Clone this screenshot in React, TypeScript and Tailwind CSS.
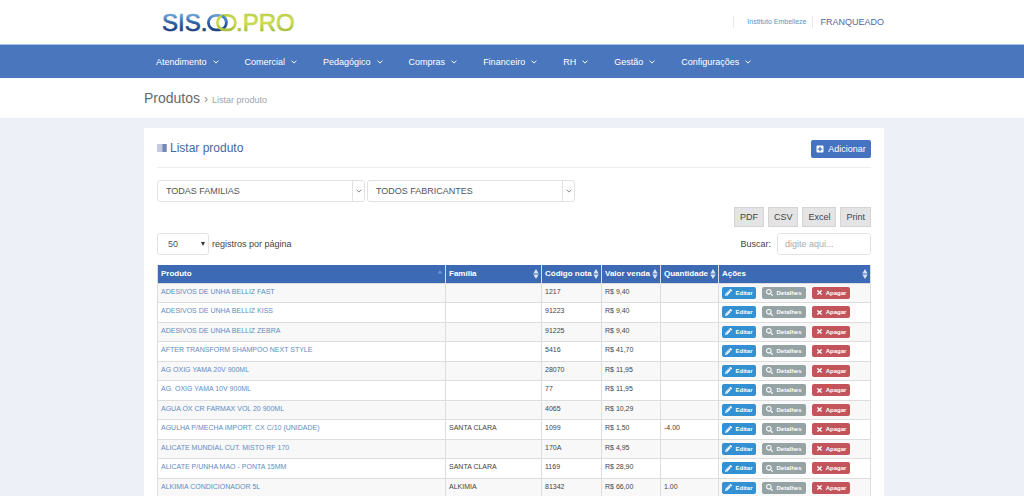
import type { ReactNode } from 'react';
import { FaPencilAlt, FaPlusSquare, FaSearch, FaTimes } from 'react-icons/fa';

const menu = ['Atendimento', 'Comercial', 'Pedagógico', 'Compras', 'Financeiro', 'RH', 'Gestão', 'Configurações'];

// the product column takes whatever width the others leave
const columns = [
  { label: 'Produto', width: '', sorted: true },
  { label: 'Família', width: 'w-[96px]' },
  { label: 'Código nota', width: 'w-[60px]' },
  { label: 'Valor venda', width: 'w-[59px]' },
  { label: 'Quantidade', width: 'w-[58px]' },
  { label: 'Ações', width: 'w-[152px]' },
];

const products = [
  { name: 'ADESIVOS DE UNHA BELLIZ FAST', family: '', code: '1217', price: 'R$ 9,40', qty: '' },
  { name: 'ADESIVOS DE UNHA BELLIZ KISS', family: '', code: '91223', price: 'R$ 9,40', qty: '' },
  { name: 'ADESIVOS DE UNHA BELLIZ ZEBRA', family: '', code: '91225', price: 'R$ 9,40', qty: '' },
  { name: 'AFTER TRANSFORM SHAMPOO NEXT STYLE', family: '', code: '5416', price: 'R$ 41,70', qty: '' },
  { name: 'AG OXIG YAMA 20V 900ML', family: '', code: '28070', price: 'R$ 11,95', qty: '' },
  { name: 'AG. OXIG YAMA 10V 900ML', family: '', code: '77', price: 'R$ 11,95', qty: '' },
  { name: 'AGUA OX CR FARMAX VOL 20 900ML', family: '', code: '4065', price: 'R$ 10,29', qty: '' },
  { name: 'AGULHA P/MECHA IMPORT. CX C/10 (UNIDADE)', family: 'SANTA CLARA', code: '1099', price: 'R$ 1,50', qty: '-4.00' },
  { name: 'ALICATE MUNDIAL CUT. MISTO RF 170', family: '', code: '170A', price: 'R$ 4,95', qty: '' },
  { name: 'ALICATE P/UNHA MAO - PONTA 15MM', family: 'SANTA CLARA', code: '1169', price: 'R$ 28,90', qty: '' },
  { name: 'ALKIMIA CONDICIONADOR 5L', family: 'ALKIMIA', code: '81342', price: 'R$ 66,00', qty: '1.00' },
];

function Container({ children, className = '' }: { children: ReactNode; className?: string }) {
  return <div className={`mx-auto w-full max-w-[744px] pl-1 ${className}`}>{children}</div>;
}

function Logo() {
  return (
    <svg width="140" height="32" viewBox="0 0 140 32" role="img" aria-label="SIS.OO.PRO">
      <defs>
        <linearGradient id="logo-blue" gradientUnits="userSpaceOnUse" x1="0" y1="8" x2="0" y2="25">
          <stop offset="0" stopColor="#6fa9dc" />
          <stop offset="0.5" stopColor="#2f62a5" />
          <stop offset="1" stopColor="#1d4080" />
        </linearGradient>
        <linearGradient id="logo-green" gradientUnits="userSpaceOnUse" x1="0" y1="8" x2="0" y2="25">
          <stop offset="0" stopColor="#bdd04a" />
          <stop offset="0.5" stopColor="#cddc55" />
          <stop offset="1" stopColor="#a5be3c" />
        </linearGradient>
      </defs>
      <g fontFamily="Liberation Sans, Arial, sans-serif" fontSize="24" strokeWidth="0.7">
        <text x="0" y="25" fill="url(#logo-blue)" stroke="url(#logo-blue)">SIS.</text>
        <text x="74" y="25" fill="url(#logo-green)" stroke="url(#logo-green)">.PRO</text>
      </g>
      <g fill="none" strokeWidth="2.8">
        <rect x="46.4" y="9.4" width="18" height="14.4" rx="7.2" stroke="url(#logo-blue)" />
        <rect x="55.4" y="9.4" width="18" height="14.4" rx="7.2" stroke="url(#logo-green)" />
        <path d="M60 10 a7.2 7.2 0 0 1 4.4 6" stroke="#4a86c4" />
      </g>
    </svg>
  );
}

function Chevron({ className }: { className: string }) {
  return (
    <svg width="6" height="4" viewBox="0 0 6 4" fill="none" stroke="currentColor" className={className} aria-hidden="true">
      <path d="M0.5 0.6 L3 3.1 L5.5 0.6" />
    </svg>
  );
}

function FilterSelect({ label }: { label: string }) {
  return (
    <div className="relative w-[208px]">
      <select
        aria-label={label}
        className="h-[22px] w-full appearance-none rounded-[3px] border border-[#e2e2e2] bg-white pl-2 pr-4 text-[9px] text-[#555555]"
      >
        <option>{label}</option>
      </select>
      <span className="pointer-events-none absolute inset-y-px right-px flex w-3 items-center justify-center border-l border-[#e2e2e2]">
        <Chevron className="text-[#888888]" />
      </span>
    </div>
  );
}

function SortIcon({ sorted }: { sorted?: boolean }) {
  if (sorted) {
    return (
      <svg className="shrink-0" width="6" height="10" viewBox="0 0 6 10" fill="#6f93d0" aria-hidden="true">
        <path d="M3 1 L5.5 4.5 H0.5 Z" />
      </svg>
    );
  }
  return (
    <svg className="shrink-0" width="6" height="10" viewBox="0 0 6 10" fill="#d6e2f5" aria-hidden="true">
      <path d="M3 0 L5.7 4.4 H0.3 Z M3 10 L0.3 5.6 H5.7 Z" />
    </svg>
  );
}

function ActionButton({ icon, label, className }: { icon: ReactNode; label: string; className: string }) {
  return (
    <button className={`flex h-3 items-center justify-center gap-[3px] rounded-[2px] text-[6px] font-bold leading-none text-white ${className}`}>
      {icon}
      {label}
    </button>
  );
}

export default function App() {
  return (
    <div className="h-screen overflow-hidden bg-[#eef0f8] font-['Liberation_Sans',Arial,sans-serif] text-[9px] leading-3 text-[#444444]">
      <header className="bg-white">
        <Container className="flex h-11 items-center justify-between">
          <div className="pl-[18px]">
            <Logo />
          </div>
          <div className="flex items-center">
            <a href="#instituto" className="border-l border-[#e4e7ee] pl-[13px] pr-[6px] text-[7px] text-[#5b93c7]">
              Instituto Embelleze
            </a>
            <span className="border-l border-[#e4e7ee] pl-[7px] text-[#56689a]">FRANQUEADO</span>
          </div>
        </Container>
      </header>

      <nav className="border-t border-[#a9c3e6] bg-[#4a76be]">
        <Container>
          <ul className="flex h-[33px] items-center gap-[26px] pl-3">
            {menu.map((item) => (
              <li key={item}>
                <a href={`#${item.toLowerCase()}`} className="flex items-center gap-[6px] text-white">
                  {item}
                  <Chevron className="text-white" />
                </a>
              </li>
            ))}
          </ul>
        </Container>
      </nav>

      <div className="bg-white">
        <Container className="flex h-10 items-baseline gap-1 pt-3">
          <h1 className="text-[14px] leading-4 text-[#5f6b6d]">Produtos</h1>
          <span className="text-[12px] text-[#8a9496]">›</span>
          <span className="text-[#a0a6b0]">Listar produto</span>
        </Container>
      </div>

      <Container className="pt-[10px]">
        <main className="bg-white px-[13px] pt-3">
          <div className="flex items-start justify-between border-b border-[#eeeeee] pb-[9px]">
            <h2 className="flex items-center gap-[3px] pt-px text-[12px] leading-[14px] text-[#44699f]">
              <svg width="10" height="8" viewBox="0 0 10 8" aria-hidden="true">
                <path fill="#c3cbe3" d="M0 0h5v8H0z" />
                <path fill="#98a5cc" d="M5 0h1v8H5zM9 0h1v8H9z" />
                <path fill="#7687b3" d="M6 0h3v8H6z" />
              </svg>
              Listar produto
            </h2>
            <button className="flex h-[18px] w-[60px] items-center justify-center gap-1 rounded-[2px] bg-[#4573c1] text-white">
              <FaPlusSquare className="size-2" />
              Adicionar
            </button>
          </div>

          <div className="flex gap-[2px] pt-3">
            <FilterSelect label="TODAS FAMILIAS" />
            <FilterSelect label="TODOS FABRICANTES" />
          </div>

          <div className="flex justify-end gap-1 pt-[5px]">
            {['PDF', 'CSV', 'Excel', 'Print'].map((format) => (
              <button key={format} className="h-5 border border-[#d4d4d4] bg-[#e4e4e4] px-[5px] text-[#444444]">
                {format}
              </button>
            ))}
          </div>

          <div className="flex items-center justify-between pb-[10px] pt-[6px]">
            <label className="flex items-center gap-[3px]">
              <span className="relative">
                <select className="h-[22px] w-[52px] appearance-none rounded-[3px] border border-[#e2e2e2] bg-white pl-[10px] text-[9px] text-[#555555]">
                  <option>50</option>
                </select>
                <svg className="pointer-events-none absolute right-1 top-1/2 -translate-y-1/2" width="4" height="4" viewBox="0 0 4 4" aria-hidden="true">
                  <path fill="#333333" d="M0 0h4L2 4z" />
                </svg>
              </span>
              registros por página
            </label>
            <label className="flex items-center gap-[6px]">
              Buscar:
              <input
                type="text"
                placeholder="digite aqui..."
                className="h-[22px] w-[94px] rounded-[3px] border border-[#e2e2e2] px-[7px] text-[9px] placeholder:text-[#aaaaaa]"
              />
            </label>
          </div>

          <table className="w-full table-fixed border-collapse text-left text-[7px] leading-2">
            <thead>
              <tr className="h-[18px] bg-[#3c6ab5] text-[8px] text-white">
                {columns.map((column) => (
                  <th key={column.label} className={`border-x border-[#dddddd] p-0 pl-[3px] pr-[2px] font-bold ${column.width}`}>
                    <div className="flex items-center justify-between whitespace-nowrap">
                      {column.label}
                      <SortIcon sorted={column.sorted} />
                    </div>
                  </th>
                ))}
              </tr>
            </thead>
            <tbody>
              {products.map((product) => (
                <tr key={product.code} className="odd:h-[19px] odd:bg-[#f8f8f8] even:h-5">
                  <td className="border border-[#dddddd] p-0 pl-[3px] pt-1 align-top">
                    <a href={`#produto-${product.code}`} className="text-[#5f8cc2]">
                      {product.name}
                    </a>
                  </td>
                  <td className="border border-[#dddddd] p-0 pl-[3px] pt-1 align-top">{product.family}</td>
                  <td className="border border-[#dddddd] p-0 pl-[3px] pt-1 align-top">{product.code}</td>
                  <td className="border border-[#dddddd] p-0 pl-[3px] pt-1 align-top">{product.price}</td>
                  <td className="border border-[#dddddd] p-0 pl-[3px] pt-1 align-top">{product.qty}</td>
                  <td className="border border-[#dddddd] p-0 pl-[3px] align-middle">
                    <div className="flex gap-[6px]">
                      <ActionButton icon={<FaPencilAlt className="size-[7px]" />} label="Editar" className="w-[34px] bg-[#3290d3]" />
                      <ActionButton icon={<FaSearch className="size-[7px]" />} label="Detalhes" className="w-11 bg-[#95a3a4]" />
                      <ActionButton icon={<FaTimes className="size-[7px]" />} label="Apagar" className="w-[38px] bg-[#c4545c]" />
                    </div>
                  </td>
                </tr>
              ))}
            </tbody>
          </table>
        </main>
      </Container>
    </div>
  );
}
